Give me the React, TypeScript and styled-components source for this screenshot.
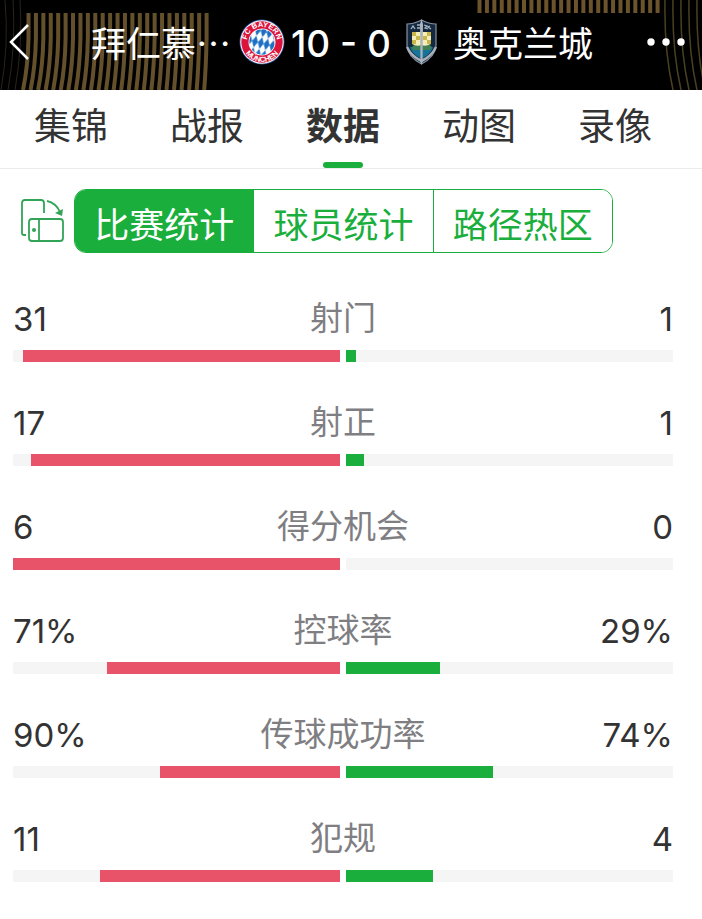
import React from 'react';
import styled, { createGlobalStyle, css } from 'styled-components';

const GREEN = '#1aae3c';
const RED = '#e95369';

const GlobalStyle = createGlobalStyle`
  * { box-sizing: border-box; }
  body {
    margin: 0;
    background: #fff;
    color: #333;
    font-family: Inter, "Noto Sans CJK SC", sans-serif;
  }
  button { font: inherit; color: inherit; background: none; border: 0; padding: 0; cursor: pointer; }
`;

const Header = styled.header`
  position: relative;
  display: flex;
  align-items: center;
  justify-content: space-between;
  height: 90px;
  padding: 0 16px 6px 8px;
  background: #000;
  color: #fff;
  overflow: hidden;
`;

const Backdrop = styled.svg`
  position: absolute;
  top: 0;
  height: 90px;
`;
const LeftBackdrop = styled(Backdrop)`left: 0; width: 234px;`;
const RightBackdrop = styled(Backdrop)`right: 0; width: 234px;`;

const IconButton = styled.button`
  position: relative;
  display: flex;
  flex: none;
`;

const Score = styled.h1`
  position: relative;
  display: flex;
  align-items: center;
  margin: 0 0 0 8px;
  font-size: 35px;
  line-height: 48px;
  font-weight: 400;
  white-space: nowrap;
`;
const TeamName = styled.span`padding-top: 4px;`;
const Home = styled(TeamName)`margin-right: 8px;`;
const Away = styled(TeamName)`margin-left: 15px;`;
const Goals = styled.span`
  margin: 0 14px 0 6px;
  padding-top: 4px;
  font-size: 37px;
  font-weight: 500;
`;

const Tabs = styled.nav`
  display: flex;
  justify-content: space-between;
  height: 79px;
  padding: 0 50px 0 34px;
  border-bottom: 1px solid #ebebeb;
`;
const Tab = styled.button<{ $active?: boolean }>`
  position: relative;
  && {
    padding-bottom: 4px;
    font-size: 37px;
    line-height: 54px;
  }
  ${(p) => p.$active && css`
    && { font-weight: 700; }
    &::after {
      content: '';
      position: absolute;
      left: 50%;
      bottom: 0;
      width: 40px;
      height: 6px;
      margin-left: -20px;
      border-radius: 3px;
      background: ${GREEN};
    }
  `}
`;

const Filters = styled.div`
  display: flex;
  align-items: center;
  gap: 10px;
  padding: 20px 89px 0 20px;
`;
const Segments = styled.div`
  display: flex;
  flex: 1;
  height: 64px;
  border: 1px solid ${GREEN};
  border-radius: 12px;
  overflow: hidden;
`;
const Segment = styled.button<{ $active?: boolean }>`
  flex: 1;
  && {
    padding-top: 8px;
    font-size: 35px;
    line-height: 48px;
    color: ${(p) => (p.$active ? '#fff' : GREEN)};
    background: ${(p) => (p.$active ? GREEN : '#fff')};
  }
  & + & { border-left: 1px solid ${GREEN}; }
`;

const Stats = styled.main`
  display: grid;
  gap: 36px;
  padding: 41px 29px 37px 13px;
`;
const Stat = styled.section`
  display: grid;
  gap: 8px;
`;
const StatText = styled.div`
  display: grid;
  grid-template-columns: 1fr auto 1fr;
  align-items: center;
  line-height: 48px;
`;
const Value = styled.span<{ $end?: boolean }>`
  padding-top: 2px;
  line-height: 46px;
  font-size: 33px;
  text-align: ${(p) => (p.$end ? 'right' : 'left')};
`;
const StatName = styled.h2`
  margin: 0;
  font-size: 33px;
  font-weight: 400;
  color: #7f7f83;
`;
const Bars = styled.div`
  display: grid;
  grid-template-columns: 1fr 1fr;
  gap: 6px;
`;
const Track = styled.div<{ $end?: boolean }>`
  display: flex;
  justify-content: ${(p) => (p.$end ? 'flex-end' : 'flex-start')};
  height: 12px;
  background: #f5f5f5;
`;
const Fill = styled.div<{ $color: string }>`
  background: ${(p) => p.$color};
`;

const tabs = ['集锦', '战报', '数据', '动图', '录像'];
const segments = ['比赛统计', '球员统计', '路径热区'];
const stats = [
  { name: '射门', home: '31', away: '1', homeBar: 97, awayBar: 3 },
  { name: '射正', home: '17', away: '1', homeBar: 94.5, awayBar: 5.5 },
  { name: '得分机会', home: '6', away: '0', homeBar: 100, awayBar: 0 },
  { name: '控球率', home: '71%', away: '29%', homeBar: 71.3, awayBar: 28.7 },
  { name: '传球成功率', home: '90%', away: '74%', homeBar: 55, awayBar: 45 },
  { name: '犯规', home: '11', away: '4', homeBar: 73.4, awayBar: 26.6 },
];

const range = (n: number) => Array.from({ length: n }, (_, i) => i);

const BayernCrest = () => (
  <svg width="46" height="46" viewBox="0 0 46 46" aria-label="Bayern">
    <defs>
      <pattern id="lozenge" width="6" height="12" patternUnits="userSpaceOnUse" patternTransform="rotate(14)">
        <rect width="6" height="12" fill="#fff" />
        <path d="M3 0 6 6 3 12 0 6Z" fill="#1c6fc4" />
      </pattern>
      <path id="crestTop" d="M8 25.500A15.200 15.200 0 1 1 38 25.500" />
      <path id="crestBottom" d="M3 23A20 20 0 0 0 43 23" />
    </defs>
    <circle cx="23" cy="23" r="22.500" fill="#31589e" />
    <circle cx="23" cy="23" r="21.700" fill="#fff" />
    <circle cx="23" cy="23" r="20.700" fill="#dc143c" />
    <circle cx="23" cy="23" r="13.500" fill="#fff" />
    <circle cx="23" cy="23" r="12.700" fill="url(#lozenge)" />
    <g fill="#fff" fontFamily="Liberation Sans, sans-serif" fontWeight="700" fontSize="7.500" textAnchor="middle">
      <text><textPath href="#crestTop" startOffset="50%">FC BAYERN</textPath></text>
      <text><textPath href="#crestBottom" startOffset="50%">MÜNCHEN</textPath></text>
    </g>
  </svg>
);

const AucklandCrest = () => (
  <svg width="33" height="46" viewBox="0 0 33 46" aria-label="Auckland City">
    <path d="M2 5Q9 5 16.500 1Q24 5 31 5V27Q30 38 16.500 45Q3 38 2 27Z" fill="#14283f" stroke="#8594a5" strokeWidth="1.200" />
    <path d="M5 28H28Q27 34 16.500 40Q6 34 5 28Z" fill="#16739a" />
    <path d="M7 28Q12 22 16 27Q22 22 27 28L25 31H8Z" fill="#3f8055" />
    <path d="M7 13H26V25Q20 28 16.500 26Q12 28 7 25Z" fill="#f4efb9" />
    <path d="M7 13h4v4H7zM11 17h4v4h-4zM7 21h4v4H7zM22 13h4v4h-4zM18 17h4v4h-4zM22 21h4v4h-4z" fill="#c9b74c" />
    <path d="M6 10l2-3 2 3M12 6h3M12 9h3M19 6l3 1-2 2 3 1M25 7l-2 1 3 2" fill="none" stroke="#a7b8c5" strokeWidth="1.300" />
    <path d="M2 28Q6 37 16.500 42Q27 37 31 28" fill="none" stroke="#a8afb9" strokeWidth="2.500" />
    <path d="M16.500 0 18 5 17.500 43 16.500 46 15.500 43 15 5Z" fill="#aeb4bd" />
  </svg>
);

export default function App() {
  return (
    <>
      <GlobalStyle />
      <Header>
        <LeftBackdrop viewBox="0 0 234 90" aria-hidden="true">
          <g fill="none" stroke="#64502b" strokeWidth="4">
            {range(25).map((i) => (
              <path key={i} d={`M${28.500 + i * 7.42} 13V38Q${28 + i * 7.42} 66 ${23 + i * 7.55} 90`} />
            ))}
          </g>
          <path d="M5 0Q9 45 1 90M13 0Q16 45 8 90M20 0Q23 45 15 90" fill="none" stroke="#29251e" />
        </LeftBackdrop>
        <RightBackdrop viewBox="0 0 234 90" aria-hidden="true">
          <g fill="none" stroke="#6b532b" strokeWidth="4">
            {range(25).map((i) => (
              <path key={i} d={`M${11.500 + i * 7.42} 0V13`} />
            ))}
          </g>
          <g fill="none" stroke="#4b4023" strokeWidth="1.500">
            {range(6).map((i) => (
              <path key={i} d={`M${197 + i * 8} 0Q${196 + i * 8} 50 ${205 + i * 8} 90`} />
            ))}
          </g>
        </RightBackdrop>
        <IconButton aria-label="返回">
          <svg width="22" height="36" viewBox="0 0 22 36" fill="none" stroke="#fff" strokeWidth="2.500">
            <path d="M20 1 3 18 20 35" />
          </svg>
        </IconButton>
        <Score>
          <Home>拜仁慕⋯</Home>
          <BayernCrest />
          <Goals>10 - 0</Goals>
          <AucklandCrest />
          <Away>奥克兰城</Away>
        </Score>
        <IconButton aria-label="更多">
          <svg width="40" height="8" viewBox="0 0 40 8" fill="#fff">
            <circle cx="5" cy="4" r="3.700" />
            <circle cx="20" cy="4" r="3.700" />
            <circle cx="35" cy="4" r="3.700" />
          </svg>
        </IconButton>
      </Header>
      <Tabs>
        {tabs.map((t) => (
          <Tab key={t} $active={t === '数据'}>{t}</Tab>
        ))}
      </Tabs>
      <Filters>
        <IconButton aria-label="横屏">
          <svg width="44" height="46" viewBox="0 0 44 46" fill="none" stroke="#32a457" strokeWidth="1.800">
            <path d="M6 37H4Q2 37 2 35V5Q2 2 5 2H21Q24 2 24 5V15" />
            <rect x="9" y="21" width="34" height="22" rx="3" />
            <path d="M19 21V43M27 3Q36 5 40 14" />
            <path d="M35 15 42 18 43 11Z" fill="#32a457" stroke="none" />
            <circle cx="14" cy="32" r="2" fill="#32a457" stroke="none" />
          </svg>
        </IconButton>
        <Segments>
          {segments.map((s, i) => (
            <Segment key={s} $active={i === 0}>{s}</Segment>
          ))}
        </Segments>
      </Filters>
      <Stats>
        {stats.map((s) => (
          <Stat key={s.name}>
            <StatText>
              <Value>{s.home}</Value>
              <StatName>{s.name}</StatName>
              <Value $end>{s.away}</Value>
            </StatText>
            <Bars>
              <Track $end><Fill $color={RED} style={{ width: `${s.homeBar}%` }} /></Track>
              <Track><Fill $color={GREEN} style={{ width: `${s.awayBar}%` }} /></Track>
            </Bars>
          </Stat>
        ))}
      </Stats>
    </>
  );
}
